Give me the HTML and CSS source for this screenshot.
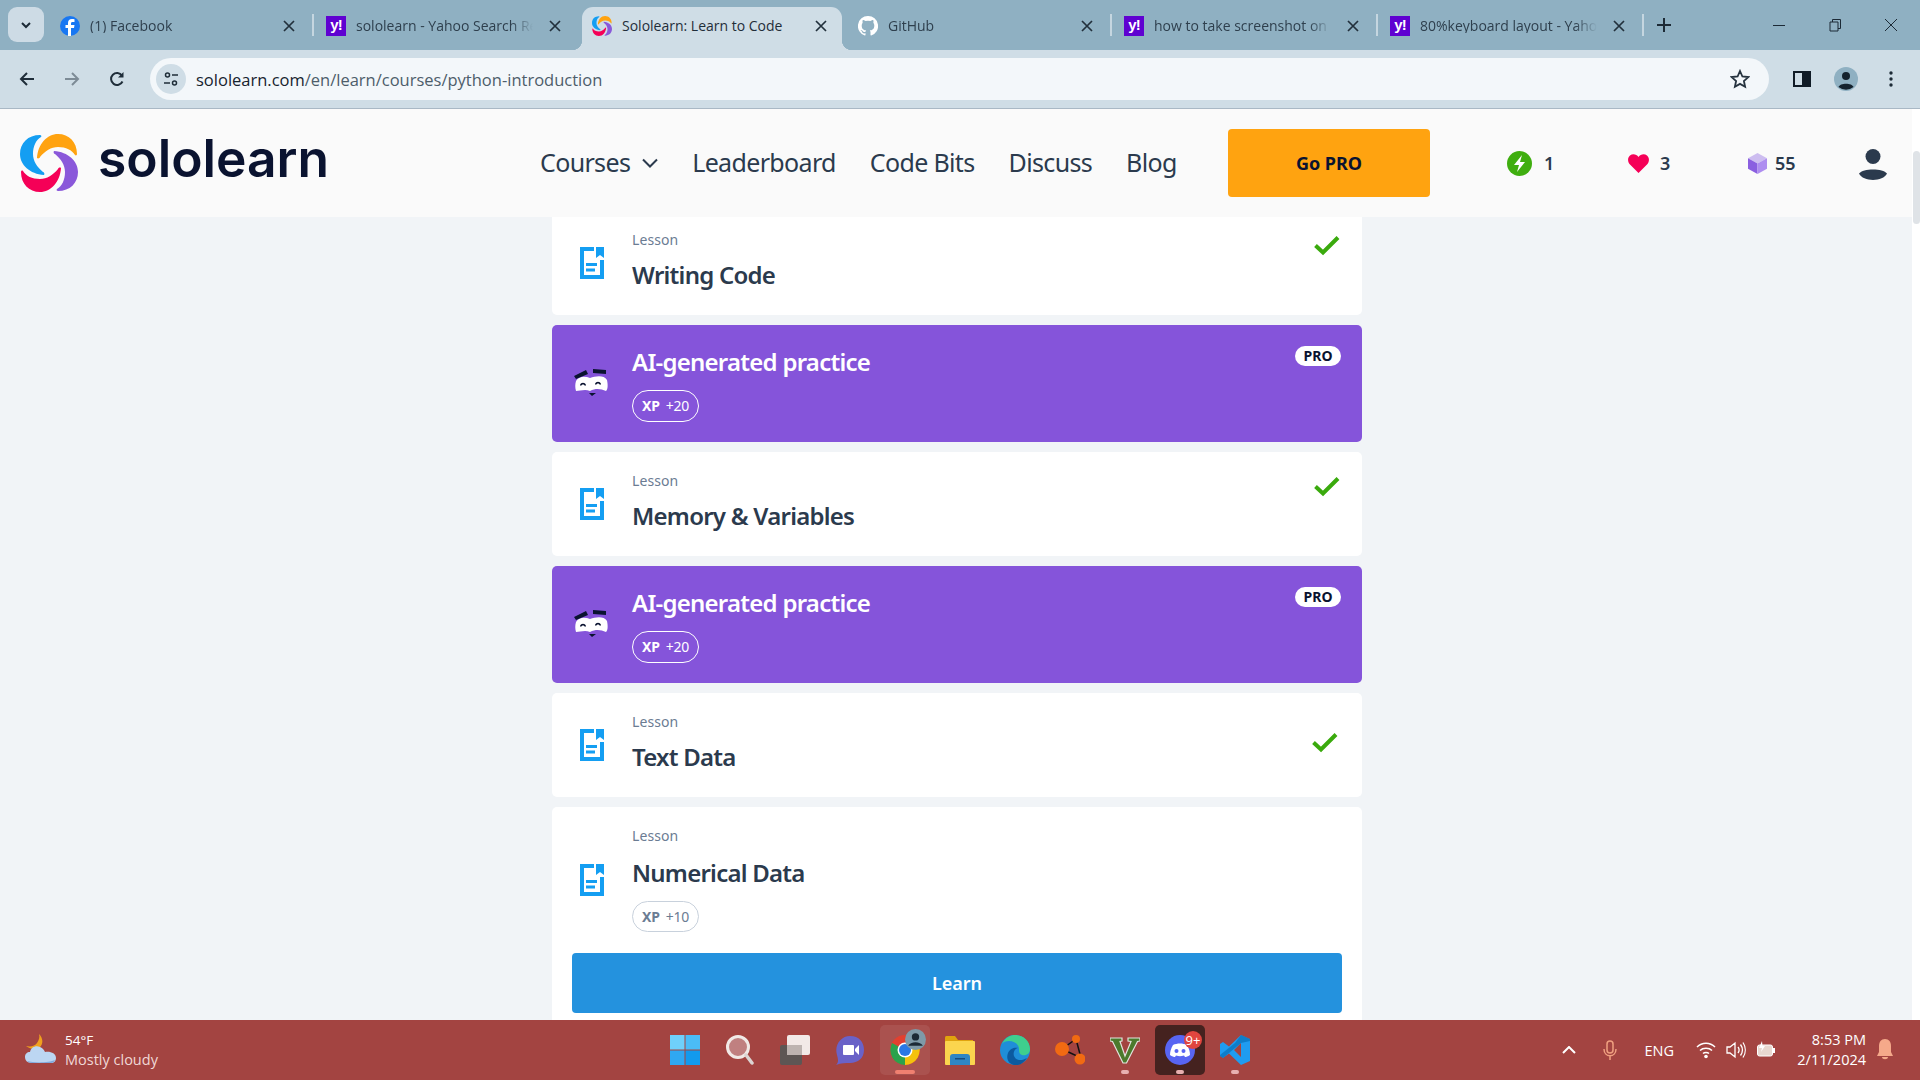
FILE: index.html
```html
<!DOCTYPE html>
<html lang="en">
<head>
<meta charset="utf-8">
<title>Sololearn: Learn to Code</title>
<link rel="stylesheet" href="styles.css">
</head>
<body>
<svg class="defs" width="0" height="0" aria-hidden="true">
  <defs>
    <path id="petal" d="M20 1C8 1 0 9 0 20C0 31 10 40 24 41C25 40 24 38 23 38C17 33 13 27 13 20C13 12 16 6 21 3C22 2 21 1 20 1Z"/>
    <g id="swirl">
      <use href="#petal" fill="#149ef2"/>
      <use href="#petal" fill="#ffa310" transform="rotate(90 29 29)"/>
      <use href="#petal" fill="#8a58da" transform="rotate(180 29 29)"/>
      <use href="#petal" fill="#f50057" transform="rotate(270 29 29)"/>
    </g>
    <g id="doc">
      <path fill="#149ef2" d="M0 0H14V4H4V28H20V13H24V32H0Z"/>
      <path fill="#149ef2" d="M16 0H24V11L20 8L16 11Z"/>
      <rect fill="#149ef2" x="6" y="16" width="11" height="3"/>
      <rect fill="#149ef2" x="6" y="21.500" width="9" height="3"/>
    </g>
    <path id="check" fill="none" stroke="#3aaa0d" stroke-width="4" d="M1.500 9.500L9 16.500L24 1.500"/>
    <g id="mask">
      <path fill="#fff" d="M3 14C6 9 12 9 17 11C23 9 31 8 34 13C35 18 35 22 33 24C28 22 23 21 17 24C12 22 7 24 3 24C2 21 2 17 3 14Z"/>
      <path fill="#0a1330" d="M1 9L13 3L15 7L3 12ZM20 2L33 3L33 7L20 6ZM7 18C8 15 12 15 13 18L12 19C11 17 9 17 8 19ZM22 17C23 14 27 14 28 17L27 18C26 16 24 16 23 18ZM16 26H23L19 29Z"/>
    </g>
    <path id="tab-x" fill="none" stroke="#22303c" stroke-width="1.700" d="M1 1L11 11M11 1L1 11"/>
  </defs>
</svg>

<div class="tabstrip">
  <button class="tab-search"><svg class="ico12" viewBox="0 0 12 12"><path fill="none" stroke="#1c2a36" stroke-width="2" d="M2 4L6 8L10 4"/></svg></button>
  <div class="tab">
    <svg class="tab-icon" viewBox="0 0 20 20"><circle cx="10" cy="10" r="10" fill="#1877f2"/><path fill="#fff" d="M11 20V12H14L14.500 9H11V7.500C11 6.500 11.500 6 12.500 6H14.500V3.200C13.500 3 12.500 3 11.800 3C9.500 3 8 4.500 8 7V9H5.500V12H8V20Z"/></svg>
    <span class="tab-title">(1) Facebook</span>
    <svg class="tab-close" viewBox="0 0 12 12"><use href="#tab-x"/></svg>
  </div>
  <span class="tab-sep"></span>
  <div class="tab">
    <span class="yahoo">y!</span>
    <span class="tab-title">sololearn - Yahoo Search Results</span>
    <svg class="tab-close" viewBox="0 0 12 12"><use href="#tab-x"/></svg>
  </div>
  <span class="tab-sep tab-sep-off"></span>
  <div class="tab tab-active">
    <svg class="tab-icon" viewBox="0 0 58 58"><use href="#swirl"/></svg>
    <span class="tab-title">Sololearn: Learn to Code</span>
    <svg class="tab-close" viewBox="0 0 12 12"><use href="#tab-x"/></svg>
  </div>
  <span class="tab-sep tab-sep-off"></span>
  <div class="tab">
    <svg class="tab-icon" viewBox="0 0 20 20"><path fill="#fff" fill-rule="evenodd" d="M10 0A10 10 0 0 0 6.800 19.500C7.300 19.600 7.500 19.300 7.500 19V17.300C4.700 17.900 4.100 16 4.100 16C3.700 14.800 3 14.500 3 14.500C2.100 13.900 3.100 13.900 3.100 13.900C4.100 14 4.600 15 4.600 15C5.500 16.500 7 16.100 7.500 15.800C7.600 15.200 7.900 14.700 8.200 14.500C6 14.200 3.700 13.400 3.700 9.500C3.700 8.400 4.100 7.500 4.700 6.800C4.600 6.500 4.300 5.500 4.800 4.100C4.800 4.100 5.600 3.800 7.500 5.100A9.500 9.500 0 0 1 12.500 5.100C14.400 3.800 15.200 4.100 15.200 4.100C15.700 5.500 15.400 6.500 15.300 6.800C15.900 7.500 16.300 8.400 16.300 9.500C16.300 13.400 14 14.200 11.800 14.500C12.200 14.800 12.500 15.400 12.500 16.300V19C12.500 19.300 12.700 19.600 13.200 19.500A10 10 0 0 0 10 0Z"/></svg>
    <span class="tab-title">GitHub</span>
    <svg class="tab-close" viewBox="0 0 12 12"><use href="#tab-x"/></svg>
  </div>
  <span class="tab-sep"></span>
  <div class="tab">
    <span class="yahoo">y!</span>
    <span class="tab-title">how to take screenshot on laptop</span>
    <svg class="tab-close" viewBox="0 0 12 12"><use href="#tab-x"/></svg>
  </div>
  <span class="tab-sep"></span>
  <div class="tab">
    <span class="yahoo">y!</span>
    <span class="tab-title">80%keyboard layout - Yahoo Search</span>
    <svg class="tab-close" viewBox="0 0 12 12"><use href="#tab-x"/></svg>
  </div>
  <span class="tab-sep"></span>
  <svg class="tab-plus" viewBox="0 0 14 14"><path fill="none" stroke="#1c2a36" stroke-width="2" d="M7 0V14M0 7H14"/></svg>
  <div class="window-controls">
    <svg class="win-btn" viewBox="0 0 14 14"><path stroke="#1c2a36" d="M1 7.500H13"/></svg>
    <svg class="win-btn" viewBox="0 0 14 14"><path fill="none" stroke="#1c2a36" d="M2 4H10V13H2ZM4.500 4V1.500H12.500V10.500H10"/></svg>
    <svg class="win-btn" viewBox="0 0 14 14"><path stroke="#1c2a36" d="M1 1L13 13M13 1L1 13"/></svg>
  </div>
</div>

<div class="toolbar">
  <svg class="nav-ico" viewBox="0 0 16 16"><path fill="none" stroke="#1f2d39" stroke-width="2" d="M15 8H2M8 2L2 8L8 14"/></svg>
  <svg class="nav-ico" viewBox="0 0 16 16"><path fill="none" stroke="#7d8b96" stroke-width="2" d="M1 8H14M8 2L14 8L8 14"/></svg>
  <svg class="nav-ico" viewBox="0 0 16 16"><path fill="none" stroke="#1f2d39" stroke-width="2" d="M13.500 10.500A6 6 0 1 1 13 4.500"/><path fill="#1f2d39" d="M14.500 1V6.500H9Z"/></svg>
  <div class="omnibox">
    <span class="site-chip"><svg class="ico16" viewBox="0 0 16 16"><g fill="none" stroke="#1f2d39" stroke-width="1.500"><circle cx="4.500" cy="4" r="2"/><path d="M9 4H15M1 12H7"/><circle cx="11.500" cy="12" r="2"/></g></svg></span>
    <span class="url"><span class="url-host">sololearn.com</span>/en/learn/courses/python-introduction</span>
    <svg class="star" viewBox="0 0 20 20"><path fill="none" stroke="#26333f" stroke-width="1.800" d="M10 2L12.400 7.500L18.300 8.100L13.900 12L15.100 17.800L10 14.900L4.900 17.800L6.100 12L1.700 8.100L7.600 7.500Z"/></svg>
  </div>
  <svg class="side-panel" viewBox="0 0 20 20"><rect x="2" y="3" width="16" height="14" fill="none" stroke="#101b26" stroke-width="2"/><rect x="10" y="3" width="8" height="14" fill="#101b26"/></svg>
  <svg class="profile" viewBox="0 0 24 24"><circle cx="12" cy="12" r="12" fill="#8fb0c2"/><circle cx="12" cy="9" r="4" fill="#14222e"/><path fill="#14222e" d="M4.500 20C6 15.500 18 15.500 19.500 20A12 12 0 0 1 4.500 20Z"/></svg>
  <svg class="dots" viewBox="0 0 4 18"><circle cx="2" cy="3" r="1.700" fill="#1c2a36"/><circle cx="2" cy="9" r="1.700" fill="#1c2a36"/><circle cx="2" cy="15" r="1.700" fill="#1c2a36"/></svg>
</div>

<div class="page">
  <div class="viewport">
    <header class="site-header">
      <div class="brand">
        <svg class="brand-mark" viewBox="0 0 58 58"><use href="#swirl"/></svg>
        <span class="brand-name">sololearn</span>
      </div>
      <nav class="site-nav">
        <a class="nav-link">Courses <svg class="chev" viewBox="0 0 16 10"><path fill="none" stroke="#2b3a4d" stroke-width="2" d="M1 1.500L8 8.500L15 1.500"/></svg></a>
        <a class="nav-link">Leaderboard</a>
        <a class="nav-link">Code Bits</a>
        <a class="nav-link">Discuss</a>
        <a class="nav-link">Blog</a>
      </nav>
      <button class="go-pro">Go PRO</button>
      <div class="stats">
        <div class="stat stat-bolt">
          <svg class="stat-ico" viewBox="0 0 25 25"><circle cx="12.500" cy="12.500" r="12.500" fill="#3fae0f"/><path fill="#fff" d="M15 4L7 14H12L10 21L18 11H13Z"/></svg>
          <span>1</span>
        </div>
        <div class="stat stat-heart">
          <svg class="stat-ico" viewBox="0 0 21 19"><path fill="#f50057" d="M10.500 19L1.500 10C-0.500 7.500 -0.500 3.500 2 1.500C4.500 -0.500 8.500 0 10.500 3C12.500 0 16.500 -0.500 19 1.500C21.500 3.500 21.500 7.500 19.500 10Z"/></svg>
          <span>3</span>
        </div>
        <div class="stat stat-cube">
          <svg class="stat-ico" viewBox="0 0 19 21"><path fill="#cdbdf0" d="M9.500 0L19 5.200L9.500 10.500L0 5.200Z"/><path fill="#8a5fe0" d="M0 5.200L9.500 10.500V21L0 15.700Z"/><path fill="#ae8df0" d="M19 5.200L9.500 10.500V21L19 15.700Z"/></svg>
          <span>55</span>
        </div>
        <svg class="user" viewBox="0 0 28 31"><circle cx="14" cy="7.500" r="7.500" fill="#2b3a4d"/><path fill="#2b3a4d" d="M0 24.500C4 19 24 19 28 24.500C24 33 4 33 0 24.500Z"/></svg>
      </div>
    </header>
    <main class="content">
      <div class="list">
        <article class="card">
          <svg class="doc" viewBox="0 0 24 32"><use href="#doc"/></svg>
          <div class="card-body">
            <div class="kicker">Lesson</div>
            <h3 class="card-title">Writing Code</h3>
          </div>
          <svg class="check" viewBox="0 0 26 20"><use href="#check"/></svg>
        </article>
        <article class="card card-ai">
          <svg class="mask" viewBox="0 0 36 30"><use href="#mask"/></svg>
          <div class="card-body">
            <h3 class="card-title">AI-generated practice</h3>
            <span class="xp"><b>XP</b> +20</span>
          </div>
          <span class="pro">PRO</span>
        </article>
        <article class="card">
          <svg class="doc" viewBox="0 0 24 32"><use href="#doc"/></svg>
          <div class="card-body">
            <div class="kicker">Lesson</div>
            <h3 class="card-title">Memory &amp; Variables</h3>
          </div>
          <svg class="check" viewBox="0 0 26 20"><use href="#check"/></svg>
        </article>
        <article class="card card-ai">
          <svg class="mask" viewBox="0 0 36 30"><use href="#mask"/></svg>
          <div class="card-body">
            <h3 class="card-title">AI-generated practice</h3>
            <span class="xp"><b>XP</b> +20</span>
          </div>
          <span class="pro">PRO</span>
        </article>
        <article class="card">
          <svg class="doc" viewBox="0 0 24 32"><use href="#doc"/></svg>
          <div class="card-body">
            <div class="kicker">Lesson</div>
            <h3 class="card-title">Text Data</h3>
          </div>
          <svg class="check check-low" viewBox="0 0 26 20"><use href="#check"/></svg>
        </article>
        <article class="card card-current">
          <div class="current-row">
            <svg class="doc" viewBox="0 0 24 32"><use href="#doc"/></svg>
            <div class="card-body">
              <div class="kicker">Lesson</div>
              <h3 class="card-title">Numerical Data</h3>
              <span class="xp xp-grey"><b>XP</b> +10</span>
            </div>
          </div>
          <button class="learn">Learn</button>
        </article>
      </div>
    </main>
  </div>
  <div class="scrollbar"><div class="thumb"></div></div>
</div>

<footer class="taskbar">
  <div class="weather">
    <svg class="weather-ico" viewBox="0 0 32 32"><path fill="#f0a01e" d="M14 1C18 5 19 11 14 15C10 17 5 16 1 13C6 14 10 13 12 10C14 7 15 4 14 1Z"/><path fill="#bcd6f2" d="M7 30C2 30 0 27 0 24C0 21 2 19 5 19C6 14 11 12 15 14C18 15 19 17 20 19C25 18 31 20 31 25C31 28 29 30 26 30Z"/><path fill="#7fa8dc" d="M2 28C8 30 24 30 30 27C29 29 28 30 26 30H7C5 30 3 29 2 28Z"/></svg>
    <div class="weather-text">
      <span class="temp">54°F</span>
      <span class="sky">Mostly cloudy</span>
    </div>
  </div>
  <div class="apps">
    <span class="app"><svg class="app-ico" viewBox="0 0 30 30"><rect width="14.500" height="14.500" fill="#6fd0fb"/><rect x="15.500" width="14.500" height="14.500" fill="#4bbcf7"/><rect y="15.500" width="14.500" height="14.500" fill="#2fa8f2"/><rect x="15.500" y="15.500" width="14.500" height="14.500" fill="#129aee"/></svg></span>
    <span class="app"><svg class="app-ico" viewBox="0 0 30 30"><circle cx="13" cy="12" r="10.500" fill="#c08080" stroke="#f1e9e6" stroke-width="3"/><path stroke="#dcd4d2" stroke-width="3.500" stroke-linecap="round" d="M21 20L27 28"/></svg></span>
    <span class="app"><svg class="app-ico" viewBox="0 0 30 30"><rect y="10" width="22" height="20" rx="2" fill="#5d5654"/><rect x="7" width="23" height="20" rx="2" fill="#f2e9e7"/><rect x="7" y="10" width="15" height="10" fill="#bdb3b0"/></svg></span>
    <span class="app"><svg class="app-ico" viewBox="0 0 30 30"><path fill="#6a62c8" d="M15 1C24 1 29 7 29 15C29 23 23 28 15 28C11 28 6 28 1 30C4 27 3 24 2 20C-1 10 6 1 15 1Z"/><rect x="8" y="10" width="11" height="10" rx="1" fill="#fff"/><path fill="#fff" d="M20 14L24 10V20L20 16Z"/></svg></span>
    <span class="app app-on"><svg class="app-ico" viewBox="0 0 30 30"><circle cx="15" cy="15" r="15" fill="#e2402f"/><path fill="#f4c20d" d="M15 15L28 8A15 15 0 0 1 15 30Z"/><path fill="#2ba24c" d="M15 15L15 30A15 15 0 0 1 2 8Z"/><circle cx="15" cy="15" r="7.500" fill="#fff"/><circle cx="15" cy="15" r="6" fill="#2a78e4"/></svg>
      <svg class="chrome-user" viewBox="0 0 20 20"><circle cx="10" cy="10" r="10" fill="#7f9aa8"/><circle cx="10" cy="7.500" r="3.500" fill="#1c2a36"/><path fill="#1c2a36" d="M3 16C5 11.500 15 11.500 17 16Z"/></svg>
    </span>
    <span class="app"><svg class="app-ico" viewBox="0 0 30 30"><path fill="#e0a30e" d="M0 3C0 1 1 1 2 1H10L13 5H28V26H0Z"/><rect y="6" width="30" height="24" rx="1" fill="#fbd54e"/><path fill="#2f86c4" d="M5 22C5 20 6 19 8 19H22C24 19 25 20 25 22V30H5Z"/><rect x="10" y="23" width="10" height="1.500" fill="#164c7e"/></svg></span>
    <span class="app"><svg class="app-ico" viewBox="0 0 30 30"><circle cx="15" cy="15" r="15" fill="#1f8ed8"/><path fill="#3fcf8e" d="M2 9C5 2 11 0 15 0C23 0 30 6 30 14C30 19 26 21 22 20C19 19 19 16 19 14C19 9 14 6 9 6C6 6 3 7 2 9Z"/><path fill="#0c5a9f" d="M14 30C8 29 6 23 8 18C10 13 15 12 18 13C14 14 13 18 14 21C16 26 22 26 27 23C24 28 19 31 14 30Z"/></svg></span>
    <span class="app"><svg class="app-ico" viewBox="0 0 30 30"><path fill="none" stroke="#111" stroke-width="1.500" d="M7 14L21 4L26 23Z"/><circle cx="7" cy="14" r="7" fill="#f26a12"/><circle cx="21" cy="4" r="4" fill="#f26a12"/><circle cx="25" cy="24" r="5.500" fill="#f26a12"/></svg></span>
    <span class="app app-dot"><svg class="app-ico" viewBox="0 0 30 30"><path fill="#4b7a2c" stroke="#e3e3df" stroke-width="1.200" d="M0 3H12V6L10 6.500L15 21L21 6.500L18 6V3H30V6L27.500 6.500L16.500 28H13L2.500 6.500L0 6Z"/></svg></span>
    <span class="app app-dark app-dot"><svg class="app-ico" viewBox="0 0 30 30"><circle cx="15" cy="15" r="15" fill="#5865f2"/><path fill="#fff" d="M8 10C12 8 18 8 22 10C24 13 25 17 25 20C23 21.500 21 22 20 22L19 20.500C16 21.500 14 21.500 11 20.500L10 22C9 22 7 21.500 5 20C5 17 6 13 8 10Z"/><circle cx="11.500" cy="16" r="2" fill="#5865f2"/><circle cx="18.500" cy="16" r="2" fill="#5865f2"/></svg><span class="badge">9+</span></span>
    <span class="app app-dot"><svg class="app-ico" viewBox="0 0 30 30"><path fill="#1f9cf0" d="M21 0L30 4V26L21 30L9 18.500L3 23L0 21V9L3 7L9 11.500ZM21 8L14 15L21 22Z"/><path fill="#0065a9" d="M21 0L30 4V6L21 8L3 23L0 21V20L15 8Z" opacity=".55"/></svg></span>
  </div>
  <div class="tray">
    <svg class="tray-chev" viewBox="0 0 14 8"><path fill="none" stroke="#fff" stroke-width="2" d="M1 7L7 1L13 7"/></svg>
    <svg class="tray-mic" viewBox="0 0 14 20"><path fill="none" stroke="#f0a080" stroke-width="1.500" d="M4 4A3 3 0 0 1 10 4V10A3 3 0 0 1 4 10ZM1 9C1 18 13 18 13 9M7 15V20"/></svg>
    <span class="lang">ENG</span>
    <div class="tray-group">
      <svg class="tray-ico" viewBox="0 0 20 18"><path fill="none" stroke="#fff" stroke-width="1.500" d="M1 6C6 1 14 1 19 6M4 9.500C7 6.500 13 6.500 16 9.500M7 12.500C8.500 11 11.500 11 13 12.500"/><circle cx="10" cy="15.500" r="1.800" fill="#fff"/></svg>
      <svg class="tray-ico" viewBox="0 0 20 18"><path fill="none" stroke="#fff" stroke-width="1.300" d="M1 6H4L9 2V16L4 12H1ZM12 6C13.500 8 13.500 10 12 12M14.500 3.500C17 7 17 11 14.500 14.500M17 1.500C20 6 20 12 17 16.500"/></svg>
      <svg class="tray-ico" viewBox="0 0 20 18"><rect x="1.500" y="4" width="15" height="11" rx="2" fill="#e8d8d0" stroke="#fff"/><rect x="17" y="7" width="2" height="5" fill="#fff"/><path fill="#fff" d="M6 0L3 7H6L5 11L9 5H6.500Z"/></svg>
    </div>
    <div class="clock">
      <span>8:53 PM</span>
      <span>2/11/2024</span>
    </div>
    <svg class="bell" viewBox="0 0 16 22"><path fill="#f5a98a" d="M8 0C12 0 14 3 14 7V13L16 17H0L2 13V7C2 3 4 0 8 0Z"/><path fill="#f5a98a" d="M5 18H11C11 21 5 21 5 18Z"/></svg>
  </div>
</footer>
</body>
</html>
```

FILE: styles.css
```css
* { box-sizing: border-box; }
html, body { margin: 0; height: 100%; }
body {
  display: flex;
  flex-direction: column;
  height: 100vh;
  overflow: hidden;
  font-family: "Noto Sans", "Open Sans", sans-serif;
  background: #fff;
}
.defs { position: absolute; }
button { border: 0; font-family: inherit; padding: 0; }

/* Tab strip */
.tabstrip {
  flex: none;
  height: 50px;
  display: flex;
  align-items: flex-end;
  background: #8fb0c2;
  padding-left: 8px;
}
.tab-search {
  width: 36px;
  height: 35px;
  margin: 0 6px 8px 0;
  border-radius: 9px;
  background: #cddbe5;
  display: flex;
  align-items: center;
  justify-content: center;
}
.ico12 { width: 12px; height: 12px; }
.tab {
  position: relative;
  width: 260px;
  height: 43px;
  display: flex;
  align-items: center;
  gap: 10px;
  padding: 0 15px 5px 10px;
  border-radius: 11px 11px 0 0;
  font: 14px/1 "Open Sans", sans-serif;
  color: #2e3f4d;
}
.tab-active { background: #cfdde6; color: #1f2d39; }
.tab-active::before, .tab-active::after {
  content: "";
  position: absolute;
  bottom: 0;
  width: 10px;
  height: 10px;
}
.tab-active::before { left: -10px; background: radial-gradient(circle at 0 0, transparent 10px, #cfdde6 10.500px); }
.tab-active::after { right: -10px; background: radial-gradient(circle at 100% 0, transparent 10px, #cfdde6 10.500px); }
.tab-icon { flex: none; width: 20px; height: 20px; }
.yahoo {
  flex: none;
  width: 20px;
  height: 20px;
  background: #5f01d1;
  color: #fff;
  font: 700 15px/18px "Liberation Sans", sans-serif;
  text-align: center;
  letter-spacing: -1px;
}
.tab-title {
  flex: 1;
  min-width: 0;
  margin-right: 6px;
  white-space: nowrap;
  overflow: hidden;
  -webkit-mask-image: linear-gradient(to left, transparent 0, #000 22px);
  mask-image: linear-gradient(to left, transparent 0, #000 22px);
}
.tab-active .tab-title { -webkit-mask-image: none; mask-image: none; }
.tab-close { flex: none; width: 12px; height: 12px; }
.tab-sep {
  flex: none;
  width: 2px;
  height: 22px;
  margin: 0 2px 14px;
  background: #c5d6e0;
}
.tab-sep-off { background: transparent; }
.tab-plus { flex: none; width: 14px; height: 14px; margin: 0 0 18px 11px; }
.window-controls {
  margin-left: auto;
  display: flex;
  gap: 42px;
  padding: 0 22px 18px 0;
}
.win-btn { width: 14px; height: 14px; }

/* Toolbar */
.toolbar {
  flex: none;
  height: 59px;
  display: flex;
  align-items: center;
  background: #cfdde6;
  border-bottom: 1px solid #a9b8c5;
  padding: 0 0 1px 19px;
}
.nav-ico { flex: none; width: 16px; height: 16px; margin-right: 29px; }
.omnibox {
  margin-left: -4px;
  width: 1619px;
  height: 42px;
  display: flex;
  align-items: center;
  background: #f3f7fa;
  border-radius: 21px;
  padding: 0 19px 0 6px;
}
.site-chip {
  flex: none;
  width: 30px;
  height: 30px;
  border-radius: 50%;
  background: #cfdde6;
  display: flex;
  align-items: center;
  justify-content: center;
}
.ico16 { width: 16px; height: 16px; }
.url {
  margin: 3px 0 0 10px;
  font: 16.500px/1 "Open Sans", sans-serif;
  color: #4d5d6a;
}
.url-host { color: #16232e; }
.star { width: 20px; height: 20px; margin-left: auto; }
.side-panel { flex: none; width: 20px; height: 20px; margin-left: 23px; }
.profile { flex: none; width: 24px; height: 24px; margin-left: 22px; }
.dots { flex: none; width: 4px; height: 18px; margin-left: 31px; }

/* Page */
.page { flex: 1; min-height: 0; display: flex; }
.viewport { flex: 1; min-width: 0; display: flex; flex-direction: column; }
.scrollbar { flex: none; width: 8px; background: #fff; padding: 42px 0 0 1px; }
.thumb { height: 73px; background: #dfe3e7; border-radius: 4px; }

.site-header {
  flex: none;
  height: 108px;
  display: flex;
  align-items: center;
  background: #fafafa;
  padding-left: 20px;
}
.brand { display: flex; align-items: center; gap: 20px; width: 520px; }
.brand-mark { flex: none; width: 58px; height: 58px; margin-top: -1px; }
.brand-name {
  font: 600 51.500px/1 Inter, sans-serif;
  color: #0a1330;
  margin-top: -8px;
}
.site-nav { display: flex; align-items: center; gap: 34px; width: 688px; margin-top: -3px; }
.nav-link {
  display: flex;
  align-items: center;
  gap: 12px;
  font-size: 25px;
  line-height: 34px;
  letter-spacing: -0.65px;
  color: #2b3a4d;
  white-space: nowrap;
}
.chev { width: 16px; height: 10px; margin-top: 3px; }
.go-pro {
  flex: none;
  width: 202px;
  height: 68px;
  border-radius: 4px;
  background: #ffa310;
  color: #0a1330;
  font-weight: 700;
  font-size: 18px;
}
.stats { flex: 1; display: flex; align-items: center; }
.stat {
  display: flex;
  align-items: center;
  font-size: 18px;
  font-weight: 600;
  color: #2b3a4d;
}
.stat-bolt { margin-left: 77px; gap: 12px; width: 121px; }
.stat-bolt .stat-ico { width: 25px; height: 25px; }
.stat-heart { gap: 11px; width: 120px; }
.stat-heart .stat-ico { width: 21px; height: 19px; }
.stat-cube { gap: 8px; width: 111px; }
.stat-cube .stat-ico { width: 19px; height: 21px; }
.user { flex: none; width: 28px; height: 31px; margin-top: 3px; }

/* Lessons */
.content {
  flex: 1;
  min-height: 0;
  overflow: hidden;
  background: #f1f4f7;
}
.list {
  width: 810px;
  margin: -6px 0 0 552px;
  display: flex;
  flex-direction: column;
  gap: 10px;
}
.card {
  display: flex;
  align-items: center;
  gap: 28px;
  height: 104px;
  padding: 19px 22px 23px 28px;
  border-radius: 5px;
  background: #fff;
}
.card-body {
  flex: 1;
  min-width: 0;
  display: flex;
  flex-direction: column;
  align-items: flex-start;
}
.doc { flex: none; width: 24px; height: 32px; margin-top: 4px; }
.kicker { font-size: 14px; line-height: 20px; letter-spacing: .1px; color: #6b7c93; }
.card-title {
  margin: 8px 0 0;
  font-size: 24px;
  line-height: 34px;
  font-weight: 600;
  letter-spacing: -0.75px;
  color: #2b3a4d;
}
.check { flex: none; align-self: flex-start; width: 26px; height: 20px; margin-top: 6px; }
.check-low { margin: 21px 2px 0 0; }
.card-ai {
  height: 117px;
  padding: 19px 21px 20px 21px;
  background: #8554da;
  gap: 23px;
}
.card-ai .card-title { margin: 0; color: #fff; }
.mask { flex: none; width: 36px; height: 30px; margin-top: -2px; }
.xp {
  display: inline-flex;
  align-items: center;
  gap: 6px;
  height: 32px;
  margin-top: 11px;
  padding: 0 9px;
  border: 1px solid #fff;
  border-radius: 16px;
  font-size: 14px;
  letter-spacing: -0.2px;
  color: #fff;
}
.xp-grey { height: 31px; margin-top: 0; border-color: #c8d1dc; color: #6b7c93; }
.pro {
  flex: none;
  align-self: flex-start;
  height: 20px;
  width: 46px;
  margin-top: 2px;
  border-radius: 10px;
  background: #fff;
  color: #0a1330;
  font-size: 14px;
  font-weight: 700;
  line-height: 20px;
  text-align: center;
}
.card-current {
  flex-direction: column;
  align-items: stretch;
  gap: 21px;
  height: 240px;
  padding: 19px 20px 0;
}
.current-row { display: flex; align-items: center; gap: 28px; padding-left: 8px; }
.current-row .card-title { margin: 10px 0 11px; }
.current-row .doc { margin-top: 1px; }
.learn {
  flex: none;
  height: 60px;
  border-radius: 4px;
  background: #2492de;
  color: #fff;
  font-size: 18px;
  font-weight: 600;
}

/* Taskbar */
.taskbar {
  flex: none;
  height: 60px;
  display: grid;
  grid-template-columns: 1fr auto 1fr;
  align-items: center;
  background: #a34441;
  color: #fff;
  font-family: "Open Sans", sans-serif;
}
.weather { display: flex; align-items: center; gap: 8px; padding-left: 25px; }
.weather-ico { width: 32px; height: 32px; margin-top: -2px; }
.weather-text { display: flex; flex-direction: column; font-size: 14.500px; line-height: 20px; }
.temp { font-size: 13.500px; }
.sky { color: #f0d8d6; }
.apps { display: flex; gap: 5px; }
.app {
  position: relative;
  width: 50px;
  height: 50px;
  border-radius: 5px;
  display: flex;
  align-items: center;
  justify-content: center;
}
.app-ico { width: 30px; height: 30px; margin-top: -1px; }
.app-on { background: rgba(255, 255, 255, .08); }
.app-dark { background: #45221f; }
.app-on::after, .app-dot::after {
  content: "";
  position: absolute;
  bottom: 1px;
  left: 21px;
  width: 8px;
  height: 4px;
  border-radius: 2px;
  background: #e8b0b0;
}
.app-on::after { left: 15px; width: 20px; background: #f08070; }
.chrome-user { position: absolute; top: 4px; right: 4px; width: 21px; height: 21px; }
.badge {
  position: absolute;
  top: 6px;
  right: 3px;
  width: 18px;
  height: 18px;
  border-radius: 50%;
  background: #e0453f;
  font-size: 13px;
  line-height: 18px;
  text-align: center;
}
.tray { display: flex; align-items: center; justify-content: flex-end; padding-right: 27px; }
.tray-chev { width: 14px; height: 8px; margin-right: 27px; }
.tray-mic { width: 14px; height: 20px; margin-right: 27px; }
.lang { font-size: 14.500px; margin-right: 22px; }
.tray-group { display: flex; gap: 10px; margin-right: 12px; }
.tray-ico { width: 20px; height: 18px; }
.clock { display: flex; flex-direction: column; align-items: flex-end; width: 78px; font-size: 14.500px; line-height: 20px; }
.bell { width: 16px; height: 22px; margin-left: 11px; }
```
